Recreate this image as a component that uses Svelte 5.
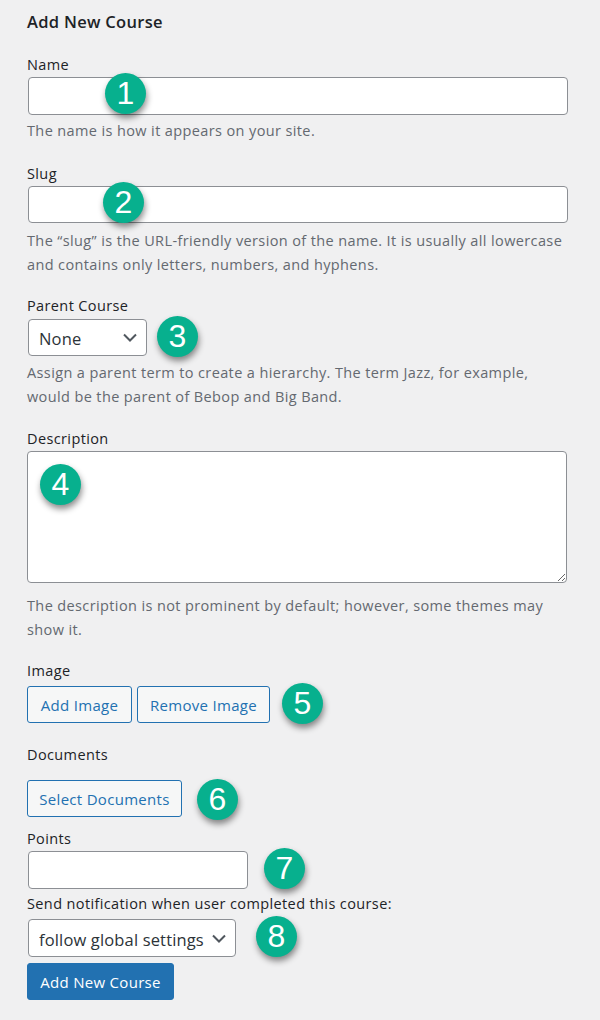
<script>
  const parents = ['None'];
  const notify = ['follow global settings'];
</script>

<form class="form" onsubmit={(e) => e.preventDefault()}>
  <h2>Add New Course</h2>

  <div class="field name">
    <label for="name">Name</label>
    <div class="control">
      <input id="name" type="text" class="wide" />
      <span class="badge b1">1</span>
    </div>
    <p>The name is how it appears on your site.</p>
  </div>

  <div class="field slug">
    <label for="slug">Slug</label>
    <div class="control">
      <input id="slug" type="text" class="wide" />
      <span class="badge b2">2</span>
    </div>
    <p>The “slug” is the URL-friendly version of the name. It is usually all lowercase and contains only letters, numbers, and hyphens.</p>
  </div>

  <div class="field parent">
    <label for="parent">Parent Course</label>
    <div class="control">
      <select id="parent" class="parent-select">
        {#each parents as p}<option>{p}</option>{/each}
      </select>
      <span class="badge b3">3</span>
    </div>
    <p>Assign a parent term to create a hierarchy. The term Jazz, for example, would be the parent of Bebop and Big Band.</p>
  </div>

  <div class="field desc">
    <label for="desc">Description</label>
    <div class="control">
      <textarea id="desc"></textarea>
      <span class="badge b4">4</span>
    </div>
    <p>The description is not prominent by default; however, some themes may show it.</p>
  </div>

  <div class="field image">
    <span class="label">Image</span>
    <div class="control buttons">
      <button type="button" class="outline add">Add Image</button>
      <button type="button" class="outline remove">Remove Image</button>
      <span class="badge b5">5</span>
    </div>
  </div>

  <div class="field docs">
    <span class="label">Documents</span>
    <div class="control">
      <button type="button" class="outline select-docs">Select Documents</button>
      <span class="badge b6">6</span>
    </div>
  </div>

  <div class="field points">
    <label for="points">Points</label>
    <div class="control">
      <input id="points" type="text" class="short" />
      <span class="badge b7">7</span>
    </div>
  </div>

  <div class="field send">
    <label for="send">Send notification when user completed this course:</label>
    <div class="control">
      <select id="send" class="send-select">
        {#each notify as n}<option>{n}</option>{/each}
      </select>
      <span class="badge b8">8</span>
    </div>
  </div>

  <button type="submit" class="primary">Add New Course</button>
</form>

<style>
  :global(body) {
    margin: 0;
    background: #f0f0f1;
  }
  .form {
    box-sizing: border-box;
    height: 1020px;
    width: 600px;
    padding: 12px 32px 0 27px;
    font-family: "Open Sans", "Noto Sans", sans-serif;
    font-size: 14.5px;
    letter-spacing: 0.38px;
    line-height: 20px;
    color: #2c3338;
    overflow: hidden;
  }
  h2 {
    margin: 0;
    font-size: 16.5px;
    letter-spacing: 0.3px;
    line-height: 20px;
    font-weight: 600;
    color: #1d2327;
  }
  label, .label {
    display: block;
    color: #1d2327;
    font-size: 14.5px;
    line-height: 20px;
    padding-top: 1px;
    margin-bottom: 2px;
  }
  p {
    margin: 0;
    color: #646970;
    font-size: 14.5px;
    line-height: 24px;
    width: 541px;
  }
  .control { position: relative; }
  .field { margin: 0; }
  .name { margin-top: 22px; }
  .name p { margin-top: 4px; }
  .slug { margin-top: 20px; }
  .slug p { margin-top: 6px; }
  .parent { margin-top: 18px; }
  .parent label { margin-bottom: 3px; }
  .parent p { margin-top: 5px; }
  .desc { margin-top: 19px; }
  .desc label { margin-bottom: 2px; }
  .desc p { margin-top: 11px; }
  .image { margin-top: 18px; }
  .docs { margin-top: 21px; }
  .points { margin-top: 11px; }
  .send { margin-top: 4px; }
  .send label { margin-bottom: 5px; }
  .docs .label { margin-bottom: 15px; }
  .image .label { margin-bottom: 5px; }

  input, select, textarea {
    display: block;
    box-sizing: border-box;
    margin-left: 1px;
    border: 1px solid #8c8f94;
    border-radius: 4px;
    background-color: #fff;
    color: #2c3338;
    font-family: inherit;
    outline: none;
  }
  .wide { width: 540px; height: 38px; }
  .slug .wide { height: 37px; }
  .short { width: 220px; height: 38px; }
  select {
    appearance: none;
    height: 38px;
    font-size: 16.5px;
    letter-spacing: 0.15px;
    padding: 2px 24px 0 10px;
    background-image: url("data:image/svg+xml,%3Csvg xmlns='http://www.w3.org/2000/svg' width='14' height='9' viewBox='0 0 14 9'%3E%3Cpath d='M1 1.5l6 6 6-6' fill='none' stroke='%2350575e' stroke-width='2'/%3E%3C/svg%3E");
    background-repeat: no-repeat;
    background-position: right 9px center;
  }
  .parent-select { width: 119px; height: 37px; }
  .send-select { width: 208px; padding-right: 0; }
  textarea {
    margin-left: 0;
    width: 540px;
    height: 132px;
    resize: both;
  }
  .buttons { display: flex; gap: 5px; }
  button {
    box-sizing: border-box;
    height: 37px;
    border-radius: 3px;
    font-family: inherit;
    font-size: 15px;
    letter-spacing: 0.3px;
    padding: 1px 0 0;
    cursor: pointer;
  }
  .outline {
    border: 1px solid #2271b1;
    background: #f6f7f7;
    color: #2271b1;
  }
  .add { width: 105px; }
  .remove { width: 133px; }
  .select-docs { width: 155px; display: block; }
  .primary {
    display: block;
    margin-top: 6px;
    width: 147px;
    border: 1px solid #2271b1;
    background: #2271b1;
    color: #fff;
  }

  .badge {
    position: absolute;
    width: 41px;
    height: 41px;
    border-radius: 50%;
    background: #07b08e;
    color: #fff;
    font-family: "Liberation Sans", Arial, sans-serif;
    font-size: 32px;
    letter-spacing: 0;
    line-height: 41px;
    text-align: center;
    box-shadow: 1px 4px 6px rgba(0, 0, 0, 0.45);
  }
  .b1 { left: 78px; top: -4px; }
  .b2 { left: 76px; top: -4px; }
  .b3 { left: 130px; top: -3px; }
  .b4 { left: 13px; top: 13px; }
  .b5 { left: 255px; top: -3px; }
  .b6 { left: 170px; top: -1px; }
  .b7 { left: 237px; top: -3px; }
  .b8 { left: 229px; top: -3px; }
</style>
